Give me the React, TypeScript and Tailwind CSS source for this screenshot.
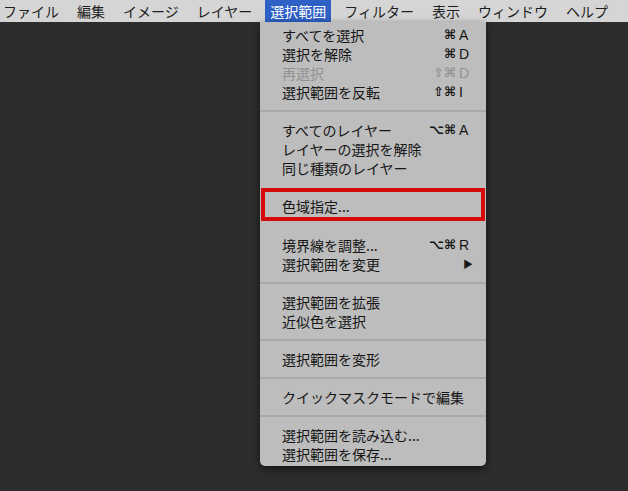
type Item = {
  label?: string;
  mods?: string;
  keyName?: string;
  disabled?: boolean;
  submenu?: boolean;
  sep?: boolean;
  boxed?: boolean;
};

const menuBar = ["ファイル", "編集", "イメージ", "レイヤー", "選択範囲", "フィルター", "表示", "ウィンドウ", "ヘルプ"];

const items: Item[] = [
  { label: "すべてを選択", mods: "⌘", keyName: "A" },
  { label: "選択を解除", mods: "⌘", keyName: "D" },
  { label: "再選択", mods: "⇧⌘", keyName: "D", disabled: true },
  { label: "選択範囲を反転", mods: "⇧⌘", keyName: "I" },
  { sep: true },
  { label: "すべてのレイヤー", mods: "⌥⌘", keyName: "A" },
  { label: "レイヤーの選択を解除" },
  { label: "同じ種類のレイヤー" },
  { label: "色域指定...", boxed: true },
  { label: "境界線を調整...", mods: "⌥⌘", keyName: "R" },
  { label: "選択範囲を変更", submenu: true },
  { sep: true },
  { label: "選択範囲を拡張" },
  { label: "近似色を選択" },
  { sep: true },
  { label: "選択範囲を変形" },
  { sep: true },
  { label: "クイックマスクモードで編集" },
  { sep: true },
  { label: "選択範囲を読み込む..." },
  { label: "選択範囲を保存..." },
];

function Shortcut({ item }: { item: Item }) {
  if (item.submenu) {
    return <span className="mr-[-6px] text-[10px] leading-none text-[#1a1a1a]">▶</span>;
  }
  if (!item.keyName) return null;
  return (
    <span className="flex items-center text-[14px] leading-none">
      <span className="font-['DejaVu_Sans',sans-serif] text-[13px] font-bold">{item.mods}</span>
      <span className="ml-[3px] w-[8px] text-left font-['Liberation_Sans',sans-serif]">{item.keyName}</span>
    </span>
  );
}

export default function App() {
  return (
    <div className="relative h-[491px] w-full overflow-hidden bg-[#2d2d2d] font-['Noto_Sans_CJK_JP','Noto_Sans_CJK_SC',sans-serif]">
      <div className="-ml-[2px] flex h-[22px] items-center gap-[8px] bg-[#d5d5d5] text-[14px] leading-none text-[#1e1e1e]">
        {menuBar.map((m) => (
          <div
            key={m}
            className={
              m === "選択範囲"
                ? "flex h-full items-center bg-[#2f60c6] px-[5px] text-white"
                : "flex h-full items-center px-[5px]"
            }
          >
            {m}
          </div>
        ))}
      </div>

      <div className="absolute left-[260px] top-[22px] w-[226px] rounded-b-[5px] bg-[#bdbdbd] pt-[3px] pb-[3px] text-[14px] leading-none text-[#151515] shadow-[0_3px_8px_rgba(0,0,0,0.6)]">
        {items.map((it, i) => {
          if (it.sep) {
            return (
              <div key={i} className="flex h-[19px] items-center">
                <div className="h-[2px] w-full bg-[#a9a9a9]" />
              </div>
            );
          }
          if (it.boxed) {
            return (
              <div
                key={i}
                className="mx-[1px] mt-[11px] mb-[14px] flex h-[33px] items-center border-4 border-[#d50a0a] pl-[17px] pt-[3px]"
              >
                {it.label}
              </div>
            );
          }
          return (
            <div
              key={i}
              className={
                it.disabled
                  ? "flex h-[19px] items-center justify-between pl-[22px] pr-[19px] text-[#939393]"
                  : "flex h-[19px] items-center justify-between pl-[22px] pr-[19px]"
              }
            >
              <span>{it.label}</span>
              <Shortcut item={it} />
            </div>
          );
        })}
      </div>
    </div>
  );
}
